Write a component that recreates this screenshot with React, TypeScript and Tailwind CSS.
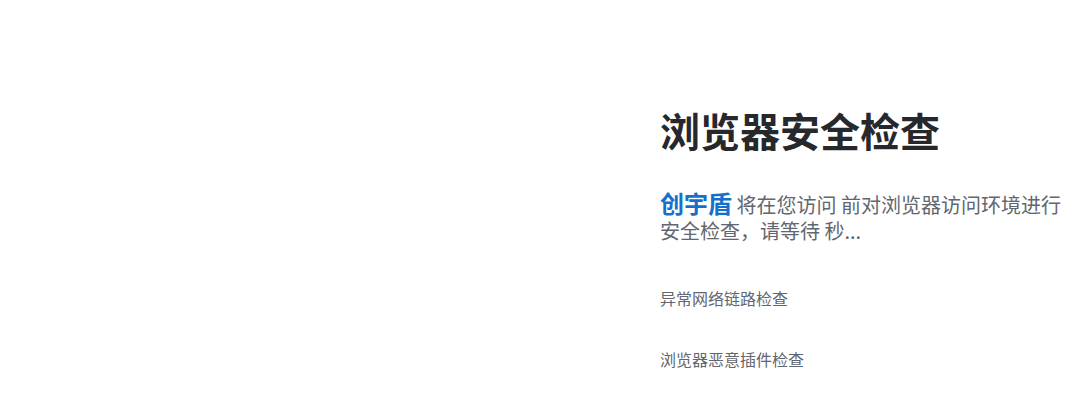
export default function App() {
  return (
    <div className="flex h-[400px] w-[1080px] bg-white font-['Noto_Sans_CJK_SC','Noto_Sans',sans-serif]">
      <div className="w-[660px] shrink-0" />
      <div className="flex flex-col pt-[102px]">
        <h1 className="text-[40px] leading-[56px] font-bold text-[#26282c]">浏览器安全检查</h1>
        <p className="mt-[32px] w-[410px] text-[20px] leading-[26px] text-[#62666e]">
          <span className="text-[24px] leading-[26px] font-bold text-[#1570cc]">创宇盾</span> 将在您访问 前对浏览器访问环境进行安全检查，请等待 秒...
        </p>
        <div className="mt-[42px] text-[16px] leading-[24px] text-[#62666e]">异常网络链路检查</div>
        <div className="mt-[37px] text-[16px] leading-[24px] text-[#62666e]">浏览器恶意插件检查</div>
      </div>
    </div>
  );
}
